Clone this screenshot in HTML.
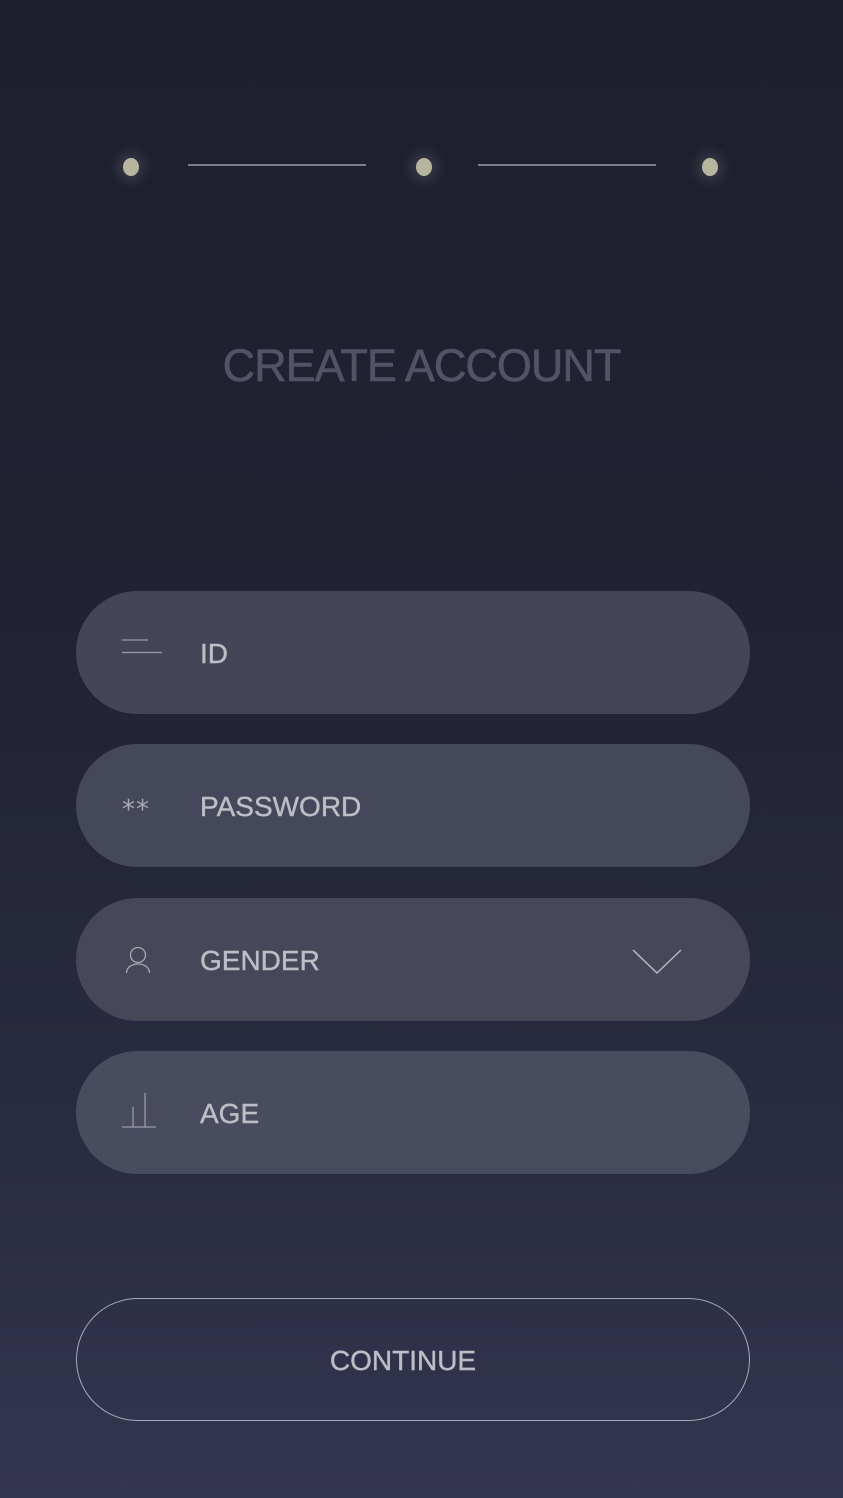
<!DOCTYPE html>
<html><head><meta charset="utf-8"><style>
*{margin:0;padding:0;box-sizing:border-box}
html,body{width:843px;height:1498px;overflow:hidden}
body{background:linear-gradient(180deg,#1d1f2d 0%,#212233 40%,#292b41 75%,#34354f 100%);font-family:"Liberation Sans",sans-serif;position:relative}
.dot{position:absolute;width:16px;height:18px;border-radius:50%;background:#b7b59e;box-shadow:0 0 12px 6px rgba(200,200,200,.15)}
.line{position:absolute;height:2px;background:#7e7f86;top:164px}
.title{position:absolute;top:340px;left:0;width:843px;text-align:center;font-size:45px;color:#515367;letter-spacing:-1px;-webkit-text-stroke:0.6px #515367}
.pill{position:absolute;left:76px;width:674px;height:123px;border-radius:62px;background:#444658}
.pill span{position:absolute;left:124px;top:47px;font-size:28px;color:#bdbdc4;letter-spacing:0px;-webkit-text-stroke:0.4px #bdbdc4}
.pill svg{position:absolute;left:0;top:0}
.btn{position:absolute;left:66px;top:1298px;width:674px;height:123px;text-align:center;line-height:126px;font-size:28px;color:#bdbdc4;-webkit-text-stroke:0.4px #bdbdc4}
.btnb{position:absolute;left:76px;top:1298px;width:674px;height:123px;border-radius:62px;border:1.5px solid #a8a9b4}
</style></head><body>
<div class="dot" style="left:123px;top:158px"></div>
<div class="line" style="left:188px;width:178px"></div>
<div class="dot" style="left:416px;top:158px"></div>
<div class="line" style="left:478px;width:178px"></div>
<div class="dot" style="left:702px;top:158px"></div>
<div class="title">CREATE ACCOUNT</div>

<div class="pill" style="top:591px"><svg width="120" height="123"><path d="M46 49H72M46 61.5H86" stroke="#9a9ba6" stroke-width="1.3" fill="none"/></svg><span>ID</span></div>
<div class="pill" style="top:744px;background:#45475a"><svg width="120" height="123"><text x="46" y="74" font-size="26" fill="#a9aab3" font-family="DejaVu Sans" letter-spacing="1">**</text></svg><span>PASSWORD</span></div>
<div class="pill" style="top:898px;background:#464859"><svg width="674" height="123"><circle cx="62" cy="57" r="7.5" stroke="#a9aab3" stroke-width="1.3" fill="none"/><path d="M50.5 75C50.5 63 73.5 63 73.5 75" stroke="#a9aab3" stroke-width="1.3" fill="none"/><path d="M557 52L581 75L605 52" stroke="#b5b6bd" stroke-width="1.5" fill="none"/></svg><span>GENDER</span></div>
<div class="pill" style="top:1051px;background:#494b5e"><svg width="120" height="123"><path d="M46 76H80M57 76V56M69 76V42" stroke="#9a9ba6" stroke-width="1.3" fill="none"/></svg><span>AGE</span></div>

<div class="btnb"></div>
<div class="btn">CONTINUE</div>
</body></html>
